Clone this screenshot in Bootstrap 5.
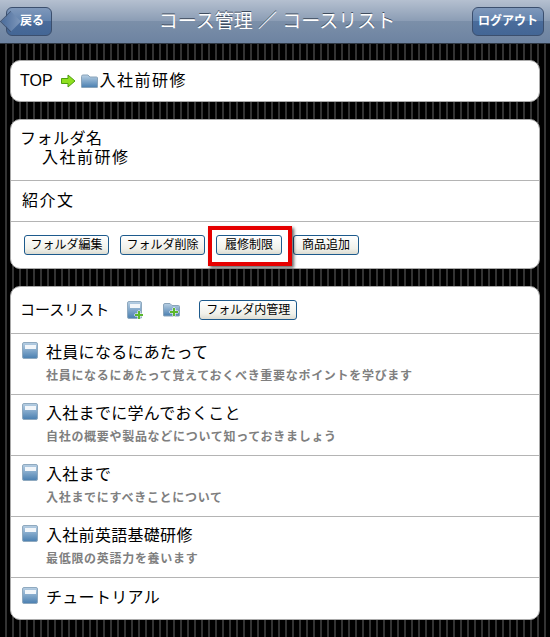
<!DOCTYPE html>
<html lang="ja">
<head>
    <meta charset="UTF-8">
    <meta name="viewport" content="width=device-width, initial-scale=1.0">
    <title>コース管理</title>
    <link href="https://cdn.jsdelivr.net/npm/bootstrap@5.3.0/dist/css/bootstrap.min.css" rel="stylesheet">
    <style>
        body {
            font-family: "Liberation Sans", "Noto Sans CJK JP", sans-serif;
            color: #000;
            background-color: #000;
            background-image: repeating-linear-gradient(90deg, #000 0, #000 5px, #333 5px, #333 7px);
            height: 637px;
            overflow: hidden;
        }
        .top-bar {
            height: 44px;
            padding: 7px 6px 0 6px;
            border-bottom: 1px solid #2d3642;
            background: linear-gradient(#b5c0d0 0, #8a9cb4 50%, #7b8fa9 50%, #6d83a1 100%);
        }
        .top-title {
            margin-left: 30px;
            color: #fff;
            font-size: 19px;
            line-height: 30px;
            text-shadow: 0 -1px 0 #3f4c5e;
        }
        .bar-btn {
            height: 29px;
            line-height: 27px;
            color: #fff;
            font-size: 12px;
            font-weight: 700;
            border: 1px solid #3b4f6e;
            border-radius: 6px;
            background: linear-gradient(#7f98bb 0, #6283ad 50%, #4a6c9b 50%, #436695 100%);
        }
        .btn-logout { width: 72px; }
        .btn-back {
            position: relative;
            width: 46px;
            padding-left: 6px;
        }
        .btn-back::before {
            content: "";
            position: absolute;
            left: -6px;
            top: 4px;
            width: 19px;
            height: 19px;
            transform: rotate(45deg) scale(.78);
            border-left: 1px solid #3b4f6e;
            border-bottom: 1px solid #3b4f6e;
            background: linear-gradient(45deg, #4a6c9b, #7f98bb);
        }
        .btn-back span { position: relative; }
        .white-panel {
            margin: 0 10px;
            background: #fff;
            border: 1px solid #a9a9a9;
            border-radius: 10px;
        }
        .panel-crumb { margin-top: 16px; height: 42px; padding: 0 9px; font-size: 16px; }
        .panel-folder { margin-top: 17px; height: 150px; }
        .panel-courses { margin-top: 17px; height: 334px; }
        .panel-row { border-bottom: 1px solid #b4b4b4; }
        .panel-row:last-child { border-bottom: 0; }
        .kanji-wide { letter-spacing: 1.5px; }
        .crumb-arrow { margin-left: 8px; }
        .crumb-folder { margin: 0 2px 0 5px; }
        .folder-name { height: 61px; padding: 9px 9px 0; font-size: 16px; line-height: 19px; letter-spacing: .5px; }
        .folder-name div + div { padding-left: 22px; letter-spacing: 1.5px; }
        .folder-intro { height: 41px; padding: 0 11px; font-size: 16px; }
        .folder-btns { padding: 13px 13px 0; gap: 11px; }
        .small-btn {
            height: 20px;
            padding: 0;
            font-size: 12px;
            line-height: 18px;
            color: #000;
            border: 1px solid #1d5a8c;
            border-radius: 3px;
            background: linear-gradient(#fff, #f1f1ea 70%, #dcdcd2);
        }
        .w-85 { width: 85px; }
        .w-66 { width: 66px; }
        .w-98 { width: 98px; }
        .limit-wrap { position: relative; }
        .limit-frame {
            position: absolute;
            left: -8px;
            top: -9px;
            width: 84px;
            height: 40px;
            border: 4px solid #e60000;
            box-shadow: 2px 2px 3px rgba(0, 0, 0, .6);
            pointer-events: none;
        }
        .list-head { height: 47px; padding: 0 9px; font-size: 15px; }
        .list-head svg { margin-left: 18px; }
        .list-head .small-btn { margin-left: 19px; }
        .list-head svg + svg { margin-left: 19px; }
        .course-row { height: 61px; padding: 8px 11px 0; }
        .course-row.last-course { height: 41px; padding-top: 9px; }
        .course-title { font-size: 16px; line-height: 22px; letter-spacing: .3px; }
        .course-sub { font-size: 12px; line-height: 18px; margin-top: 3px; font-weight: 700; color: #7f7f7f; letter-spacing: .7px; }
        .course-row svg { flex: none; margin-right: 8px; }
        .plus-mark { stroke: #fff; stroke-width: 1; paint-order: stroke; }
    </style>
</head>
<body class="m-0">
    <svg width="0" height="0" class="position-absolute">
        <defs>
            <linearGradient id="blueFill" x1="0" y1="0" x2="0" y2="1">
                <stop offset="0" stop-color="#b9d0e4"/>
                <stop offset="1" stop-color="#4a7fb0"/>
            </linearGradient>
            <symbol id="bookIcon" viewBox="0 0 16 17">
                <rect x="0.5" y="0.5" width="15" height="16" rx="1.5" fill="url(#blueFill)" stroke="#8fa9bf"/>
                <rect x="3" y="3" width="11" height="4" fill="#f2f6fa"/>
            </symbol>
            <symbol id="folderIcon" viewBox="0 0 17 14">
                <path d="M0.5 13V2.5Q0.5 1 2 1H7L9 3H15.5Q16.5 3 16.5 4V13Q16.5 13.5 16 13.5H1Q0.5 13.5 0.5 13Z" fill="url(#blueFill)" stroke="#8aa4ba"/>
            </symbol>
            <symbol id="plusIcon" viewBox="-1 -1 10 10">
                <path class="plus-mark" d="M3 0H5V3H8V5H5V8H3V5H0V3H3Z" fill="#5cb82e"/>
            </symbol>
        </defs>
    </svg>

    <header class="top-bar d-flex justify-content-between">
        <a class="bar-btn btn-back d-block text-center text-decoration-none"><span>戻る</span></a>
        <div class="top-title">コース管理 ／ コースリスト</div>
        <a class="bar-btn btn-logout d-block text-center text-decoration-none">ログアウト</a>
    </header>

    <div class="white-panel panel-crumb d-flex align-items-center">
        <span>TOP</span>
        <svg class="crumb-arrow" width="15" height="14" viewBox="0 0 15 14">
            <path d="M0.5 4.5H7V1L14 7L7 13V9.5H0.5Z" fill="#8fe01f" stroke="#4f9e10"/>
        </svg>
        <svg class="crumb-folder" width="17" height="14"><use href="#folderIcon"/></svg>
        <span class="kanji-wide">入社前研修</span>
    </div>

    <div class="white-panel panel-folder">
        <div class="panel-row folder-name">
            <div>フォルダ名</div>
            <div>入社前研修</div>
        </div>
        <div class="panel-row folder-intro kanji-wide d-flex align-items-center">紹介文</div>
        <div class="panel-row folder-btns d-flex">
            <button type="button" class="small-btn w-85">フォルダ編集</button>
            <button type="button" class="small-btn w-85">フォルダ削除</button>
            <span class="limit-wrap">
                <button type="button" class="small-btn w-66 d-block">履修制限</button>
                <span class="limit-frame"></span>
            </span>
            <button type="button" class="small-btn w-66">商品追加</button>
        </div>
    </div>

    <div class="white-panel panel-courses">
        <div class="panel-row list-head d-flex align-items-center">
            <span>コースリスト</span>
            <svg width="17" height="19" viewBox="0 0 17 19">
                <rect x="0.5" y="0.5" width="14" height="17" rx="1.5" fill="url(#blueFill)" stroke="#8fa9bf"/>
                <rect x="3" y="3" width="10" height="4" fill="#f2f6fa"/>
                <use href="#plusIcon" x="7" y="9" width="10" height="10"/>
            </svg>
            <svg width="17" height="17" viewBox="0 0 17 17">
                <use href="#folderIcon" width="17" height="15"/>
                <use href="#plusIcon" x="6" y="5" width="10" height="10"/>
            </svg>
            <button type="button" class="small-btn w-98">フォルダ内管理</button>
        </div>
        <div class="panel-row course-row d-flex">
            <svg width="16" height="17"><use href="#bookIcon"/></svg>
            <div>
                <div class="course-title">社員になるにあたって</div>
                <div class="course-sub">社員になるにあたって覚えておくべき重要なポイントを学びます</div>
            </div>
        </div>
        <div class="panel-row course-row d-flex">
            <svg width="16" height="17"><use href="#bookIcon"/></svg>
            <div>
                <div class="course-title">入社までに学んでおくこと</div>
                <div class="course-sub">自社の概要や製品などについて知っておきましょう</div>
            </div>
        </div>
        <div class="panel-row course-row d-flex">
            <svg width="16" height="17"><use href="#bookIcon"/></svg>
            <div>
                <div class="course-title">入社まで</div>
                <div class="course-sub">入社までにすべきことについて</div>
            </div>
        </div>
        <div class="panel-row course-row d-flex">
            <svg width="16" height="17"><use href="#bookIcon"/></svg>
            <div>
                <div class="course-title">入社前英語基礎研修</div>
                <div class="course-sub">最低限の英語力を養います</div>
            </div>
        </div>
        <div class="panel-row course-row last-course d-flex">
            <svg width="16" height="17"><use href="#bookIcon"/></svg>
            <div class="course-title">チュートリアル</div>
        </div>
    </div>

    <script src="https://cdn.jsdelivr.net/npm/bootstrap@5.3.0/dist/js/bootstrap.bundle.min.js"></script>
</body>
</html>
